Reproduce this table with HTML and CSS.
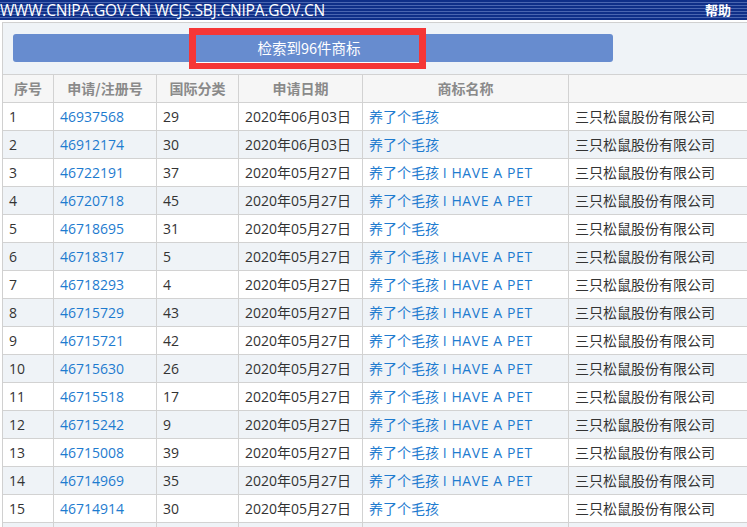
FILE: index.html
```html
<!DOCTYPE html>
<html lang="zh-CN">
<head>
<meta charset="utf-8">
<title>商标检索</title>
<link rel="stylesheet" href="styles.css">
</head>
<body>
<div class="topbar">
  <span class="site">WWW.CNIPA.GOV.CN WCJS.SBJ.CNIPA.GOV.CN</span>
  <span class="help">帮助</span>
</div>
<div class="main">
  <div class="toolbar">
    <div class="result-btn">检索到96件商标</div>
    <div class="highlight"></div>
  </div>
  <div class="grid">
    <div class="row head">
      <div class="c">序号</div><div class="c">申请/注册号</div><div class="c">国际分类</div><div class="c">申请日期</div><div class="c">商标名称</div><div class="c"></div>
    </div>
    <div class="row"><div class="c">1</div><div class="c link">46937568</div><div class="c">29</div><div class="c">2020年06月03日</div><div class="c link">养了个毛孩</div><div class="c">三只松鼠股份有限公司</div></div>
    <div class="row alt"><div class="c">2</div><div class="c link">46912174</div><div class="c">30</div><div class="c">2020年06月03日</div><div class="c link">养了个毛孩</div><div class="c">三只松鼠股份有限公司</div></div>
    <div class="row"><div class="c">3</div><div class="c link">46722191</div><div class="c">37</div><div class="c">2020年05月27日</div><div class="c link">养了个毛孩 <span class="en">I HAVE A PET</span></div><div class="c">三只松鼠股份有限公司</div></div>
    <div class="row alt"><div class="c">4</div><div class="c link">46720718</div><div class="c">45</div><div class="c">2020年05月27日</div><div class="c link">养了个毛孩 <span class="en">I HAVE A PET</span></div><div class="c">三只松鼠股份有限公司</div></div>
    <div class="row"><div class="c">5</div><div class="c link">46718695</div><div class="c">31</div><div class="c">2020年05月27日</div><div class="c link">养了个毛孩</div><div class="c">三只松鼠股份有限公司</div></div>
    <div class="row alt"><div class="c">6</div><div class="c link">46718317</div><div class="c">5</div><div class="c">2020年05月27日</div><div class="c link">养了个毛孩 <span class="en">I HAVE A PET</span></div><div class="c">三只松鼠股份有限公司</div></div>
    <div class="row"><div class="c">7</div><div class="c link">46718293</div><div class="c">4</div><div class="c">2020年05月27日</div><div class="c link">养了个毛孩 <span class="en">I HAVE A PET</span></div><div class="c">三只松鼠股份有限公司</div></div>
    <div class="row alt"><div class="c">8</div><div class="c link">46715729</div><div class="c">43</div><div class="c">2020年05月27日</div><div class="c link">养了个毛孩 <span class="en">I HAVE A PET</span></div><div class="c">三只松鼠股份有限公司</div></div>
    <div class="row"><div class="c">9</div><div class="c link">46715721</div><div class="c">42</div><div class="c">2020年05月27日</div><div class="c link">养了个毛孩 <span class="en">I HAVE A PET</span></div><div class="c">三只松鼠股份有限公司</div></div>
    <div class="row alt"><div class="c">10</div><div class="c link">46715630</div><div class="c">26</div><div class="c">2020年05月27日</div><div class="c link">养了个毛孩 <span class="en">I HAVE A PET</span></div><div class="c">三只松鼠股份有限公司</div></div>
    <div class="row"><div class="c">11</div><div class="c link">46715518</div><div class="c">17</div><div class="c">2020年05月27日</div><div class="c link">养了个毛孩 <span class="en">I HAVE A PET</span></div><div class="c">三只松鼠股份有限公司</div></div>
    <div class="row alt"><div class="c">12</div><div class="c link">46715242</div><div class="c">9</div><div class="c">2020年05月27日</div><div class="c link">养了个毛孩 <span class="en">I HAVE A PET</span></div><div class="c">三只松鼠股份有限公司</div></div>
    <div class="row"><div class="c">13</div><div class="c link">46715008</div><div class="c">39</div><div class="c">2020年05月27日</div><div class="c link">养了个毛孩 <span class="en">I HAVE A PET</span></div><div class="c">三只松鼠股份有限公司</div></div>
    <div class="row alt"><div class="c">14</div><div class="c link">46714969</div><div class="c">35</div><div class="c">2020年05月27日</div><div class="c link">养了个毛孩 <span class="en">I HAVE A PET</span></div><div class="c">三只松鼠股份有限公司</div></div>
    <div class="row"><div class="c">15</div><div class="c link">46714914</div><div class="c">30</div><div class="c">2020年05月27日</div><div class="c link">养了个毛孩</div><div class="c">三只松鼠股份有限公司</div></div>
    <div class="row alt"><div class="c"></div><div class="c"></div><div class="c"></div><div class="c"></div><div class="c"></div><div class="c"></div></div>
  </div>
</div>
</body>
</html>
```
FILE: styles.css
```css
html, body {
  margin: 0;
  padding: 0;
  background: #ffffff;
  overflow: hidden;
}
body {
  font-family: "Open Sans", "Noto Sans CJK SC", sans-serif;
  font-size: 14px;
  color: #333333;
}
.topbar {
  height: 20px;
  display: flex;
  align-items: center;
  justify-content: space-between;
  padding: 0 16px 0 0;
  background: repeating-linear-gradient(to bottom, #0f2f88 0, #0f2f88 2px, #4a66b0 2px, #4a66b0 3px);
  color: #ffffff;
}
.site {
  font-size: 15.5px;
  line-height: 20px;
  letter-spacing: -0.2px;
}
.help {
  font-family: "Noto Sans CJK SC", sans-serif;
  font-size: 13px;
  font-weight: 700;
  line-height: 20px;
}
.main {
  margin-top: 2px;
  margin-left: 2px;
  border-top: 1px solid #d0d0d0;
  border-left: 1px solid #d0d0d0;
  background: #eff3f7;
  min-height: 600px;
}
.toolbar {
  position: relative;
  padding: 11px 0 12px 10px;
}
.result-btn {
  width: 600px;
  height: 28px;
  box-sizing: border-box;
  padding-right: 8px;
  background: #678ccf;
  border-radius: 3px;
  color: #ffffff;
  font-family: "Noto Sans CJK SC", sans-serif;
  font-size: 14.5px;
  line-height: 28px;
  text-align: center;
}
.highlight {
  position: absolute;
  left: 186px;
  top: 5px;
  width: 223px;
  height: 28px;
  border: 7px solid #f53636;
  border-bottom-width: 6px;
  box-shadow: inset 0 -1px 0 #ffffff;
}
.grid {
  border-top: 1px solid #d2d2d2;
  width: 780px;
}
.row {
  display: grid;
  grid-template-columns: 51px 103px 82px 124px 206px 214px;
  height: 28px;
  box-sizing: border-box;
  border-bottom: 1px solid #d2d2d2;
  background: #ffffff;
}
.row.alt {
  background: #eff3f7;
}
.row.head {
  background: #f6f6f6;
}
.c {
  border-right: 1px solid #d2d2d2;
  padding: 0 6px;
  line-height: 27px;
  white-space: nowrap;
  overflow: hidden;
}
.head .c {
  text-align: center;
  font-family: "Noto Sans CJK SC", sans-serif;
  font-weight: 700;
  color: #8a8a8a;
}
.link {
  color: #1e7bcf;
}
.en {
  letter-spacing: 0.6px;
}
```
